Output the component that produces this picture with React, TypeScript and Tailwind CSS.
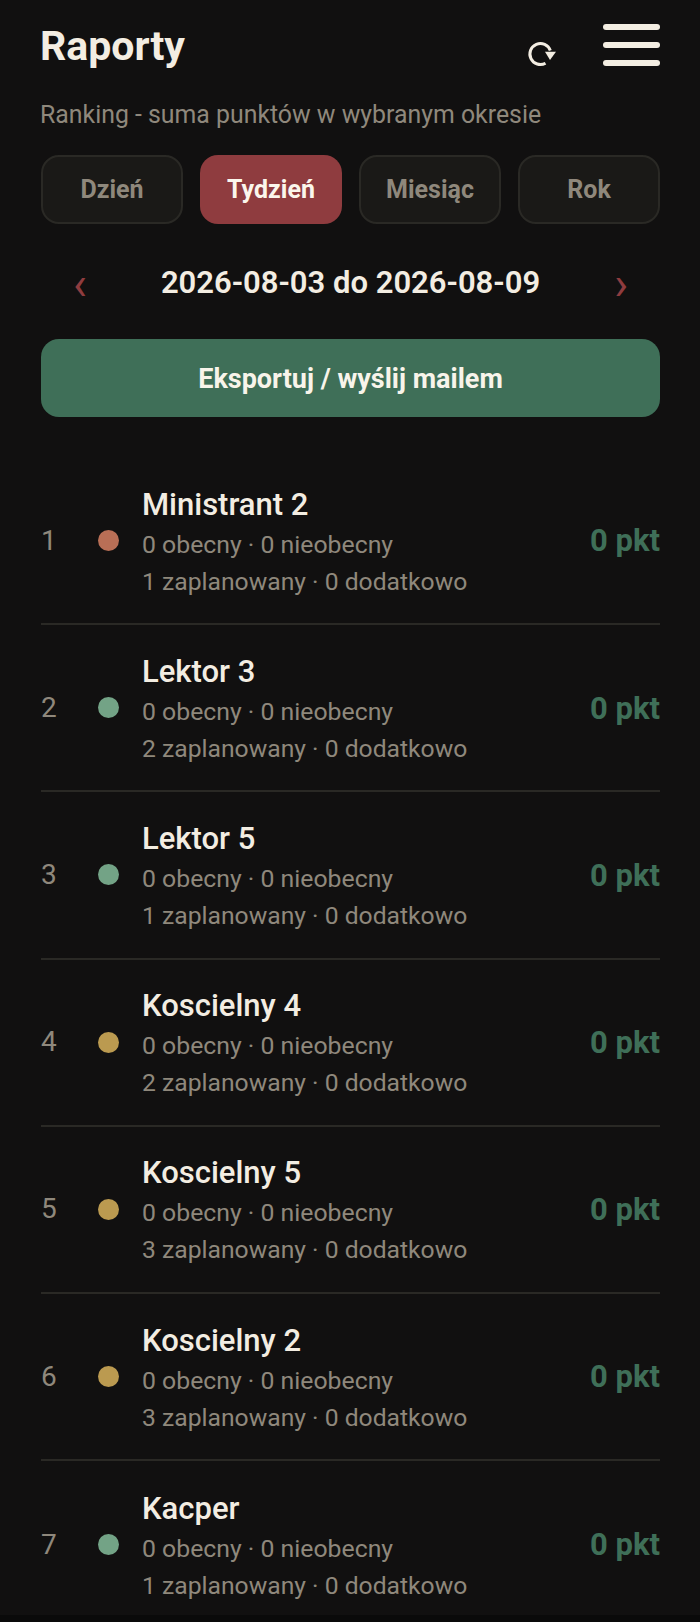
const tabs = ["Dzień", "Tydzień", "Miesiąc", "Rok"];

const rows = [
    {name: "Ministrant 2", planned: 1, dot: "bg-[#b96f56]"},
    {name: "Lektor 3", planned: 2, dot: "bg-[#73a386]"},
    {name: "Lektor 5", planned: 1, dot: "bg-[#73a386]"},
    {name: "Koscielny 4", planned: 2, dot: "bg-[#bb9a50]"},
    {name: "Koscielny 5", planned: 3, dot: "bg-[#bb9a50]"},
    {name: "Koscielny 2", planned: 3, dot: "bg-[#bb9a50]"},
    {name: "Kacper", planned: 1, dot: "bg-[#73a386]"},
];

function RefreshIcon() {
    return (
        <svg width="32" height="28" viewBox="0 0 32 28" fill="none" stroke="#f3ede2" strokeWidth="3">
            <path d="M20.5 23.2 A10.5 10.5 0 1 1 25.3 10.5"/>
            <path d="M20 11.7 H31 L25 20 Z" fill="#f3ede2" stroke="none"/>
        </svg>
    );
}

export default function App() {
    return (
        <div className="w-[700px] h-[1622px] overflow-hidden bg-[#0a0a0a] font-['Roboto',sans-serif]">
            <div className="h-[1615px] overflow-hidden bg-[#111010] pl-[41px] pr-[40px]">
                <div className="flex items-start justify-between h-[86px]">
                    <h1 className="mt-[21px] -ml-[1px] text-[41px] leading-[50px] font-bold text-[#f3ede2]">Raporty</h1>
                    <div className="flex items-start">
                        <div className="mt-[40px] mr-[46px]"><RefreshIcon/></div>
                        <div className="mt-[24px] flex flex-col gap-[12px] w-[57px]">
                            <div className="h-[6px] rounded-full bg-[#f3ede2]"/>
                            <div className="h-[6px] rounded-full bg-[#f3ede2]"/>
                            <div className="h-[6px] rounded-full bg-[#f3ede2]"/>
                        </div>
                    </div>
                </div>

                <p className="text-[24.85px] leading-[30px] text-[#8f887c] mt-[14px] -ml-[1px]">Ranking - suma punktów w wybranym okresie</p>

                <div className="grid grid-cols-4 gap-[17px] mt-[25px]">
                    {tabs.map(tab => (
                        <div
                            key={tab}
                            className={tab === "Tydzień"
                                ? "h-[69px] rounded-[18px] bg-[#8f3c3f] flex items-center justify-center text-[25px] font-bold text-[#fbf6ec]"
                                : "h-[69px] rounded-[18px] border-2 border-[#2a2925] bg-[#1a1917] flex items-center justify-center text-[25px] font-bold text-[#8f887c]"}
                        >{tab}</div>
                    ))}
                </div>

                <div className="flex items-center justify-between mt-[35px] h-[48px] px-[32px]">
                    <span className="text-[#8f3c3f] text-[46px] leading-none">‹</span>
                    <span className="text-[31px] font-semibold text-[#f3ede2]">2026-08-03 do 2026-08-09</span>
                    <span className="text-[#8f3c3f] text-[46px] leading-none">›</span>
                </div>

                <div className="mt-[32px] h-[78px] pt-[2px] rounded-[18px] bg-[#3f6f58] flex items-center justify-center text-[27px] font-bold text-[#f8f4ea]">
                    Eksportuj / wyślij mailem
                </div>

                <div className="mt-[41px]">
                    {rows.map((row, i) => (
                        <div key={row.name} className="flex items-center h-[167.2px] border-b-2 border-[#2a2925] last:border-b-0">
                            <span className="w-[57px] text-[28px] text-[#8f887c]">{i + 1}</span>
                            <span className={`w-[21px] h-[21px] rounded-full ${row.dot}`}/>
                            <div className="ml-[23px] mt-[4px] flex-1">
                                <div className="text-[31px] leading-[38px] mb-[2px] font-medium text-[#f3ede2]">{row.name}</div>
                                <div className="text-[24.8px] leading-[37px] text-[#8f887c]">0 obecny · 0 nieobecny</div>
                                <div className="text-[24.7px] leading-[37px] text-[#8f887c]">{row.planned} zaplanowany · 0 dodatkowo</div>
                            </div>
                            <span className="mt-[2px] text-[31px] font-bold text-[#3f6f58]">0 pkt</span>
                        </div>
                    ))}
                </div>
            </div>
        </div>
    );
}
